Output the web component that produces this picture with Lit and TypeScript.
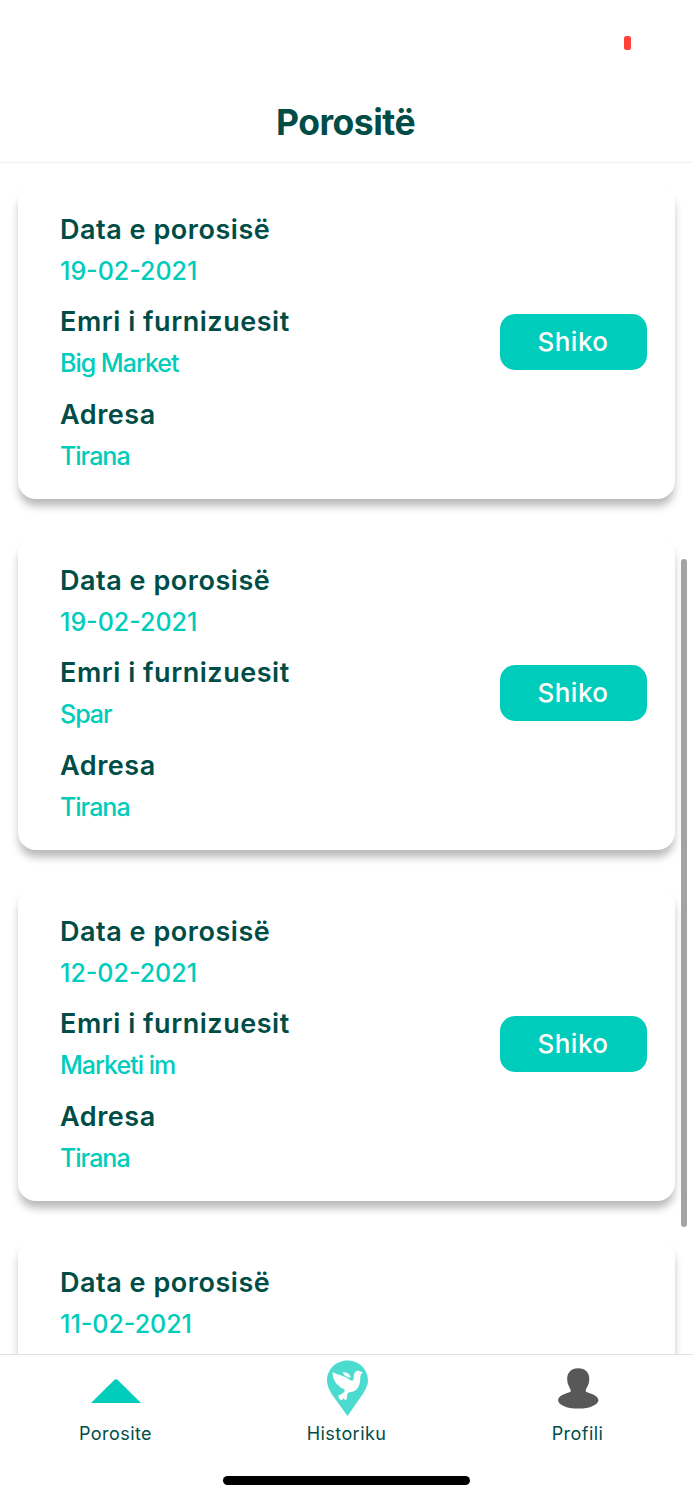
import { LitElement, html, css, svg, nothing } from "lit";
import { customElement, property } from "lit/decorators.js";

interface Order {
  date: string;
  supplier?: string;
  address?: string;
}

const ORDERS: Order[] = [
  { date: "19-02-2021", supplier: "Big Market", address: "Tirana" },
  { date: "19-02-2021", supplier: "Spar", address: "Tirana" },
  { date: "12-02-2021", supplier: "Marketi im", address: "Tirana" },
  { date: "11-02-2021" },
];

@customElement("order-card")
export class OrderCard extends LitElement {
  @property({ attribute: false }) order!: Order;

  static styles = css`
    :host {
      display: flex;
      box-sizing: border-box;
      flex: none;
      height: 314px;
      align-items: center;
      justify-content: space-between;
      padding: 0 28px 0 42.5px;
      border-radius: 18px;
      background: #fff;
      box-shadow: 0 8px 9px -1px rgba(0, 0, 0, 0.28);
    }
    .fields {
      display: flex;
      flex-direction: column;
      align-self: flex-start;
      gap: 9.4px;
      margin: 0;
      padding-top: 24px;
      white-space: nowrap;
    }
    .label {
      font-size: 27px;
      line-height: 41px;
      font-weight: 600;
      letter-spacing: 0.53px;
      color: #004d47;
    }
    .value {
      margin: 0;
      font-size: 25px;
      line-height: 42px;
      font-weight: 450;
      letter-spacing: -1px;
      color: #00ccbb;
    }
    .date {
      letter-spacing: 0;
    }
    .view {
      width: 147px;
      height: 56px;
      padding: 0 1px 1px 0;
      border: 0;
      border-radius: 15px;
      background: #00ccbb;
      color: #fff;
      font: 500 26px/54px Inter, sans-serif;
      letter-spacing: 0.5px;
    }
  `;

  private field(label: string, value: string, kind = "") {
    return html`<div>
      <dt class="label">${label}</dt>
      <dd class="value ${kind}">${value}</dd>
    </div>`;
  }

  render() {
    const { date, supplier, address } = this.order;
    return html`
      <dl class="fields">
        ${this.field("Data e porosisë", date, "date")}
        ${supplier ? this.field("Emri i furnizuesit", supplier) : nothing}
        ${address ? this.field("Adresa", address) : nothing}
      </dl>
      ${supplier ? html`<button class="view">Shiko</button>` : nothing}
    `;
  }
}

const ordersIcon = svg`<path fill="#00ccbb" d="M21 43 44 20.200Q46 18.200 48 20.200L71 43Z"/>`;
const historyIcon = svg`
  <path fill="#4bdbcf" d="M46.500 0.500C35 0.500 26 9.300 26 20.500C26 25.500 28 29.500 31 34.500L46.500 56L61.500 34.500C64.500 29.500 67 25.500 67 20.500C67 9.300 58 0.500 46.500 0.500Z"/>
  <path fill="#fff" d="M31.500 12C36 14.500 42 15.500 46.500 18.200C49 19.700 51 22 52.300 20C53.300 17.500 52 12.500 55.500 11C58 10 60 12.300 62.300 12.200C60.500 13.300 59.500 14.500 59.300 17C59.300 22 58.500 27 55 30C52 32.500 48.500 31.500 46.800 33.200C45.500 34.800 47 38 44.800 40.300C43.500 40.300 43.300 38.500 42.500 37.800C42 39 41.500 40.300 40 40.300C38 39.500 37.200 37 37.600 35.300C39.500 34.500 42.500 33.500 44 30.500C42.500 27.500 38.800 28.500 38.300 26C34.500 23.500 31.500 18.500 31.500 12Z"/>
  <path fill="#fff" d="M42 12.200C45 11.700 49.500 14 49.800 17.500C46.500 17.500 42.500 15.500 42 12.200Z"/>`;
const profileIcon = svg`<path fill="#585858" d="M46.200 8.300C39 8.300 34.900 13 35.200 19.500C35.400 26 38.800 28 38.800 31.200C38 33.200 27 33.500 26 40.200C26.500 44.500 34 48.600 46.200 48.600C58.500 48.600 66 44.500 66.500 40.200C65.500 33.500 54.500 33.200 53.700 31.200C53.700 28 57.100 26 57.300 19.500C57.600 13 53.500 8.300 46.200 8.300Z"/>`;

@customElement("app-root")
export class AppRoot extends LitElement {
  static styles = css`
    :host {
      display: flex;
      position: relative;
      flex-direction: column;
      box-sizing: border-box;
      width: 693px;
      height: 1500px;
      overflow: hidden;
      background: #fff;
      font-family: Inter, sans-serif;
      color: #004d47;
    }
    .status {
      display: flex;
      flex: none;
      height: 50px;
      align-items: flex-end;
      justify-content: flex-end;
      padding-right: 62px;
    }
    .battery {
      width: 7px;
      height: 14px;
      border-radius: 2.5px;
      background: #ff4238;
    }
    .header {
      flex: none;
      box-sizing: border-box;
      height: 113px;
      padding: 50px 2px 0 0;
      border-bottom: 1px solid #f1f1f2;
      text-align: center;
    }
    .title {
      margin: 0;
      font-size: 35.5px;
      line-height: 46px;
      font-weight: 700;
      letter-spacing: -0.5px;
    }
    .orders {
      display: flex;
      position: relative;
      flex: 1;
      min-height: 0;
      flex-direction: column;
      gap: 37px;
      padding: 22px 18px 0 17.5px;
      overflow: hidden;
    }
    .scrollbar {
      position: absolute;
      top: 396px;
      right: 6px;
      width: 6px;
      height: 668px;
      border-radius: 3px;
      background: #a3a3a3;
    }
    .tabs {
      display: grid;
      flex: none;
      box-sizing: border-box;
      height: 107px;
      grid-template-columns: repeat(3, 1fr);
      border-top: 1px solid #e0e0e0;
      background: #fff;
    }
    .tab {
      display: flex;
      flex-direction: column;
      align-items: center;
      padding-top: 5px;
      font-size: 18px;
      line-height: 24px;
      letter-spacing: 0.45px;
    }
    .icon {
      width: 92px;
      height: 60px;
      margin-bottom: 2px;
    }
    .home {
      display: flex;
      flex: none;
      height: 39px;
      align-items: center;
      justify-content: center;
    }
    .indicator {
      width: 247px;
      height: 9px;
      border-radius: 5px;
      background: #000;
    }
  `;

  private tab(icon: unknown, label: string) {
    return html`<div class="tab">
      <svg class="icon" viewBox="0 0 92 60">${icon}</svg>
      <span>${label}</span>
    </div>`;
  }

  render() {
    return html`
      <div class="status"><div class="battery"></div></div>
      <header class="header"><h1 class="title">Porositë</h1></header>
      <main class="orders">
        ${ORDERS.map((order) => html`<order-card .order=${order}></order-card>`)}
        <div class="scrollbar"></div>
      </main>
      <nav class="tabs">
        ${this.tab(ordersIcon, "Porosite")}
        ${this.tab(historyIcon, "Historiku")}
        ${this.tab(profileIcon, "Profili")}
      </nav>
      <div class="home"><div class="indicator"></div></div>
    `;
  }
}
